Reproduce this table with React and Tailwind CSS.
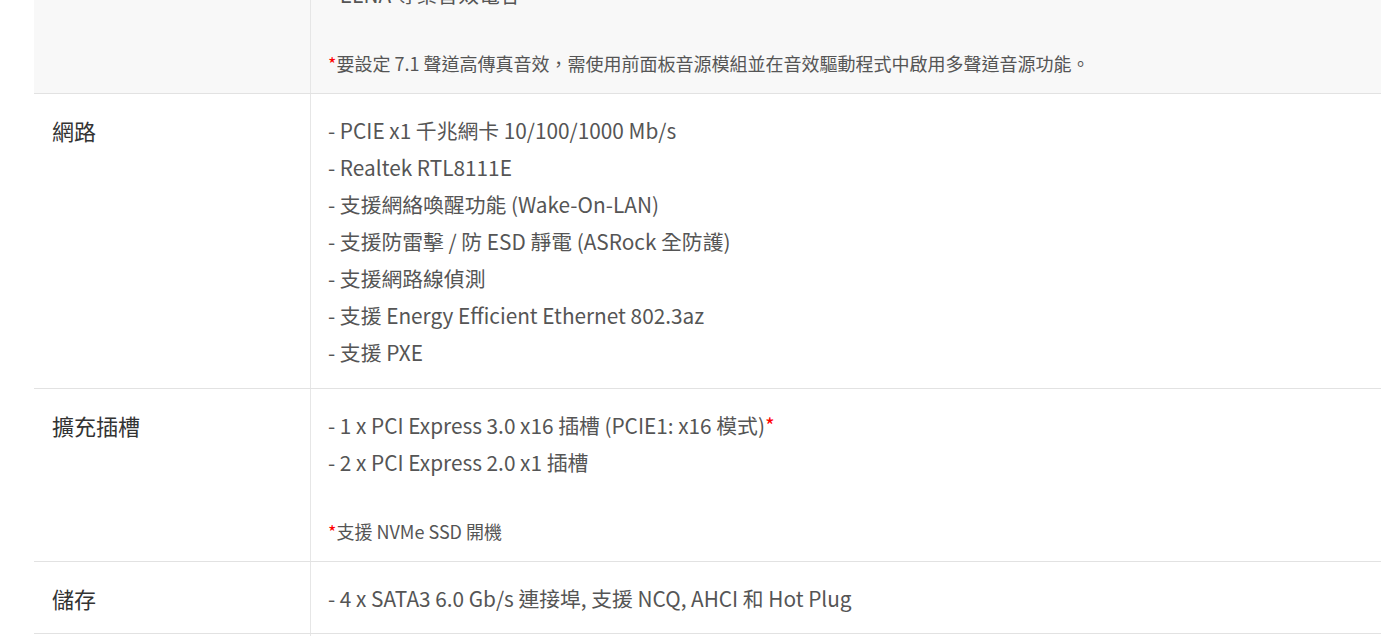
import React from 'react';

const font = { fontFamily: '"Noto Sans CJK TC", "Noto Sans", sans-serif' };

const Star = () => <span className="text-[#ff0000]">*</span>;

const Row = ({ label, gray = false, last = false, children }) => (
  <div className={`flex border-b border-[#e2e2e2] ${gray ? 'bg-[#f8f8f8]' : 'bg-white'}`}>
    <div className={`w-[277px] shrink-0 border-r border-[#e6e6e6] px-[18px] pt-[18px] text-[22px] leading-[37px] text-[#333] ${last ? 'pb-[16px]' : 'pb-[17px]'}`}>
      {label}
    </div>
    <div className={`flex-1 pl-[17px] pr-4 pt-[18px] text-[20.8px] leading-[37px] text-[#555] ${last ? 'pb-[16px]' : 'pb-[17px]'}`}>
      {children}
    </div>
  </div>
);

const Note = ({ children }) => (
  <p className="text-[18px] leading-[26px] text-[#555]">
    <Star />
    {children}
  </p>
);

export default function App() {
  return (
    <div className="h-[636px] overflow-hidden bg-white" style={font}>
      <div className="-mt-[42px] ml-[34px] w-[1400px]">
        <Row label="" gray>
          <p>- ELNA 專業音效電容</p>
          <p>&nbsp;</p>
          <Note>要設定 7.1 聲道高傳真音效，需使用前面板音源模組並在音效驅動程式中啟用多聲道音源功能。</Note>
        </Row>
        <Row label="網路">
          <p>- PCIE x1 千兆網卡 10/100/1000 Mb/s</p>
          <p>- Realtek RTL8111E</p>
          <p>- 支援網絡喚醒功能 (Wake-On-LAN)</p>
          <p>- 支援防雷擊 / 防 ESD 靜電 (ASRock 全防護)</p>
          <p>- 支援網路線偵測</p>
          <p>- 支援 Energy Efficient Ethernet 802.3az</p>
          <p>- 支援 PXE</p>
        </Row>
        <Row label="擴充插槽">
          <p>- 1 x PCI Express 3.0 x16 插槽 (PCIE1: x16 模式)<Star /></p>
          <p>- 2 x PCI Express 2.0 x1 插槽</p>
          <p>&nbsp;</p>
          <Note>支援 NVMe SSD 開機</Note>
        </Row>
        <Row label="儲存" last>
          <p>- 4 x SATA3 6.0 Gb/s 連接埠, 支援 NCQ, AHCI 和 Hot Plug</p>
        </Row>
        <div className="flex h-[40px]">
          <div className="w-[277px] shrink-0 border-r border-[#e6e6e6]" />
        </div>
      </div>
    </div>
  );
}
